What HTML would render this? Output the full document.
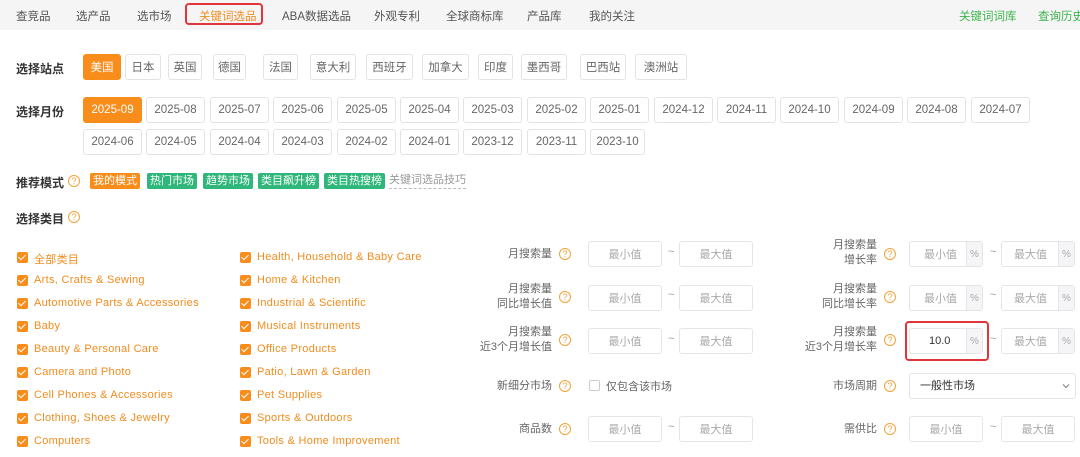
<!DOCTYPE html>
<html><head><meta charset="utf-8">
<style>
*{box-sizing:border-box;margin:0;padding:0}
body{width:1080px;height:457px;overflow:hidden;background:#fff;font-family:"Liberation Sans","Noto Sans CJK SC",sans-serif;font-size:12px;color:#333;position:relative}
.a{position:absolute;white-space:nowrap}
.nav{position:absolute;left:0;top:0;width:1080px;height:30px;background:#f5f5f6}
.nav span{position:absolute;top:8px;font-size:11.5px;color:#555;white-space:nowrap}
.lbl{font-size:12px;color:#333;font-weight:bold}
.btn{position:absolute;height:26px;border:1px solid #e3e3e3;border-radius:3px;font-size:11.5px;color:#666;display:flex;align-items:center;justify-content:center;background:#fff;white-space:nowrap}
.btn.on{background:#f98d1c;border-color:#f98d1c;color:#fff}
.q{position:absolute;width:12px;height:12px;border:1px solid #f2a33a;border-radius:50%;color:#f2a33a;font-size:9px;line-height:10px;text-align:center}
.tag{position:absolute;top:173px;height:16px;font-size:11px;color:#fff;line-height:16px;padding:0 3px;border-radius:2px;background:#2fb67a;white-space:nowrap}
.cb{position:absolute;width:11px;height:11px;background:#f98d1c;border-radius:2px}
.cb:after{content:"";position:absolute;left:3px;top:1px;width:3px;height:6px;border:solid #fff;border-width:0 1.5px 1.5px 0;transform:rotate(45deg)}
.ct{position:absolute;font-size:11px;color:#f08c1e;letter-spacing:.3px;white-space:nowrap}
.fl{position:absolute;text-align:right;font-size:11px;color:#666;line-height:15px;width:120px}
.in{position:absolute;height:26px;border:1px solid #e5e5e5;border-radius:3px;font-size:11px;color:#aaa;display:flex;align-items:center;justify-content:center;width:74px;white-space:nowrap}
.pc{position:absolute;right:0;top:0;bottom:0;width:16px;background:#f5f5f7;border-left:1px solid #e5e5e5;color:#aaa;font-size:10px;display:flex;align-items:center;justify-content:center}
.tl{position:absolute;color:#999;font-size:11px}
</style></head><body>
<div class="nav">
<span style="left:16px">查竞品</span><span style="left:76px">选产品</span><span style="left:137px">选市场</span>
<span style="left:199px;color:#f08c1e">关键词选品</span>
<span style="left:282px">ABA数据选品</span><span style="left:374px">外观专利</span><span style="left:446px">全球商标库</span><span style="left:527px">产品库</span><span style="left:589px">我的关注</span>
<span style="left:959px;color:#3bb34a">关键词词库</span><span style="left:1038px;color:#3bb34a">查询历史</span>
</div>
<div class="a" style="left:185px;top:3px;width:78px;height:22px;border:2px solid #e0353b;border-radius:4px"></div>

<div class="a lbl" style="left:16px;top:60px">选择站点</div>
<div class="btn on" style="left:83px;top:54px;width:38px">美国</div>
<div class="btn" style="left:125px;top:54px;width:36px">日本</div>
<div class="btn" style="left:168px;top:54px;width:34px">英国</div>
<div class="btn" style="left:213px;top:54px;width:33px">德国</div>
<div class="btn" style="left:263px;top:54px;width:35px">法国</div>
<div class="btn" style="left:310px;top:54px;width:46px">意大利</div>
<div class="btn" style="left:366px;top:54px;width:47px">西班牙</div>
<div class="btn" style="left:422px;top:54px;width:47px">加拿大</div>
<div class="btn" style="left:478px;top:54px;width:35px">印度</div>
<div class="btn" style="left:521px;top:54px;width:46px">墨西哥</div>
<div class="btn" style="left:580px;top:54px;width:46px">巴西站</div>
<div class="btn" style="left:635px;top:54px;width:52px">澳洲站</div>

<div class="a lbl" style="left:16px;top:103px">选择月份</div>
<div class="btn on" style="left:83px;top:97px;width:59px">2025-09</div>
<div class="btn" style="left:146px;top:97px;width:59px">2025-08</div>
<div class="btn" style="left:210px;top:97px;width:59px">2025-07</div>
<div class="btn" style="left:273px;top:97px;width:59px">2025-06</div>
<div class="btn" style="left:337px;top:97px;width:59px">2025-05</div>
<div class="btn" style="left:400px;top:97px;width:59px">2025-04</div>
<div class="btn" style="left:463px;top:97px;width:59px">2025-03</div>
<div class="btn" style="left:527px;top:97px;width:59px">2025-02</div>
<div class="btn" style="left:590px;top:97px;width:59px">2025-01</div>
<div class="btn" style="left:654px;top:97px;width:59px">2024-12</div>
<div class="btn" style="left:717px;top:97px;width:59px">2024-11</div>
<div class="btn" style="left:780px;top:97px;width:59px">2024-10</div>
<div class="btn" style="left:844px;top:97px;width:59px">2024-09</div>
<div class="btn" style="left:907px;top:97px;width:59px">2024-08</div>
<div class="btn" style="left:971px;top:97px;width:59px">2024-07</div>
<div class="btn" style="left:83px;top:129px;width:59px">2024-06</div>
<div class="btn" style="left:146px;top:129px;width:59px">2024-05</div>
<div class="btn" style="left:210px;top:129px;width:59px">2024-04</div>
<div class="btn" style="left:273px;top:129px;width:59px">2024-03</div>
<div class="btn" style="left:337px;top:129px;width:59px">2024-02</div>
<div class="btn" style="left:400px;top:129px;width:59px">2024-01</div>
<div class="btn" style="left:463px;top:129px;width:59px">2023-12</div>
<div class="btn" style="left:527px;top:129px;width:59px">2023-11</div>
<div class="btn" style="left:590px;top:129px;width:55px">2023-10</div>

<div class="a lbl" style="left:16px;top:174px">推荐模式</div><div class="q" style="left:68px;top:175px">?</div>
<div class="tag" style="left:90px;background:#f98d1c">我的模式</div>
<div class="tag" style="left:147px">热门市场</div>
<div class="tag" style="left:203px">趋势市场</div>
<div class="tag" style="left:258px">类目飙升榜</div>
<div class="tag" style="left:324px">类目热搜榜</div>
<div class="a" style="left:389px;top:173px;font-size:11px;color:#999;border-bottom:1px dashed #bbb;line-height:15px">关键词选品技巧</div>

<div class="a lbl" style="left:16px;top:210px">选择类目</div><div class="q" style="left:68px;top:211px">?</div>

<div class="cb" style="left:17px;top:252px"></div><div class="ct" style="left:34px;top:251px">全部类目</div>
<div class="cb" style="left:17px;top:275px"></div><div class="ct" style="left:34px;top:274px">Arts, Crafts &amp; Sewing</div>
<div class="cb" style="left:17px;top:298px"></div><div class="ct" style="left:34px;top:297px">Automotive Parts &amp; Accessories</div>
<div class="cb" style="left:17px;top:321px"></div><div class="ct" style="left:34px;top:320px">Baby</div>
<div class="cb" style="left:17px;top:344px"></div><div class="ct" style="left:34px;top:343px">Beauty &amp; Personal Care</div>
<div class="cb" style="left:17px;top:367px"></div><div class="ct" style="left:34px;top:366px">Camera and Photo</div>
<div class="cb" style="left:17px;top:390px"></div><div class="ct" style="left:34px;top:389px">Cell Phones &amp; Accessories</div>
<div class="cb" style="left:17px;top:413px"></div><div class="ct" style="left:34px;top:412px">Clothing, Shoes &amp; Jewelry</div>
<div class="cb" style="left:17px;top:436px"></div><div class="ct" style="left:34px;top:435px">Computers</div>
<div class="cb" style="left:240px;top:252px"></div><div class="ct" style="left:257px;top:251px">Health, Household &amp; Baby Care</div>
<div class="cb" style="left:240px;top:275px"></div><div class="ct" style="left:257px;top:274px">Home &amp; Kitchen</div>
<div class="cb" style="left:240px;top:298px"></div><div class="ct" style="left:257px;top:297px">Industrial &amp; Scientific</div>
<div class="cb" style="left:240px;top:321px"></div><div class="ct" style="left:257px;top:320px">Musical Instruments</div>
<div class="cb" style="left:240px;top:344px"></div><div class="ct" style="left:257px;top:343px">Office Products</div>
<div class="cb" style="left:240px;top:367px"></div><div class="ct" style="left:257px;top:366px">Patio, Lawn &amp; Garden</div>
<div class="cb" style="left:240px;top:390px"></div><div class="ct" style="left:257px;top:389px">Pet Supplies</div>
<div class="cb" style="left:240px;top:413px"></div><div class="ct" style="left:257px;top:412px">Sports &amp; Outdoors</div>
<div class="cb" style="left:240px;top:436px"></div><div class="ct" style="left:257px;top:435px">Tools &amp; Home Improvement</div>

<div class="fl" style="left:432px;top:247px">月搜索量</div><div class="q" style="left:559px;top:248px">?</div>
<div class="in" style="left:588px;top:241px">最小值</div><div class="tl" style="left:668px;top:246px">~</div><div class="in" style="left:679px;top:241px">最大值</div>
<div class="fl" style="left:432px;top:282px">月搜索量<br>同比增长值</div><div class="q" style="left:559px;top:291px">?</div>
<div class="in" style="left:588px;top:285px">最小值</div><div class="tl" style="left:668px;top:289px">~</div><div class="in" style="left:679px;top:285px">最大值</div>
<div class="fl" style="left:432px;top:325px">月搜索量<br>近3个月增长值</div><div class="q" style="left:559px;top:334px">?</div>
<div class="in" style="left:588px;top:328px">最小值</div><div class="tl" style="left:668px;top:333px">~</div><div class="in" style="left:679px;top:328px">最大值</div>
<div class="fl" style="left:432px;top:379px">新细分市场</div><div class="q" style="left:559px;top:380px">?</div>
<div class="a" style="left:589px;top:380px;width:11px;height:11px;border:1px solid #ccc;border-radius:2px"></div>
<div class="a" style="left:606px;top:378px;font-size:11px;color:#666">仅包含该市场</div>
<div class="fl" style="left:432px;top:422px">商品数</div><div class="q" style="left:559px;top:423px">?</div>
<div class="in" style="left:588px;top:416px">最小值</div><div class="tl" style="left:668px;top:421px">~</div><div class="in" style="left:679px;top:416px">最大值</div>

<div class="fl" style="left:757px;top:238px">月搜索量<br>增长率</div><div class="q" style="left:884px;top:248px">?</div>
<div class="in" style="left:909px;top:241px;justify-content:flex-start;padding-left:14px">最小值<div class="pc">%</div></div><div class="tl" style="left:990px;top:246px">~</div><div class="in" style="left:1001px;top:241px;justify-content:flex-start;padding-left:12px">最大值<div class="pc">%</div></div>
<div class="fl" style="left:757px;top:282px">月搜索量<br>同比增长率</div><div class="q" style="left:884px;top:291px">?</div>
<div class="in" style="left:909px;top:285px;justify-content:flex-start;padding-left:14px">最小值<div class="pc">%</div></div><div class="tl" style="left:990px;top:289px">~</div><div class="in" style="left:1001px;top:285px;justify-content:flex-start;padding-left:12px">最大值<div class="pc">%</div></div>
<div class="fl" style="left:757px;top:325px">月搜索量<br>近3个月增长率</div><div class="q" style="left:884px;top:334px">?</div>
<div class="in" style="left:909px;top:328px;justify-content:flex-start;padding-left:19px;color:#333">10.0<div class="pc">%</div></div><div class="tl" style="left:990px;top:333px">~</div><div class="in" style="left:1001px;top:328px;justify-content:flex-start;padding-left:12px">最大值<div class="pc">%</div></div>
<div class="a" style="left:905px;top:321px;width:84px;height:40px;border:2px solid #e0353b;border-radius:4px"></div>
<div class="fl" style="left:757px;top:379px">市场周期</div><div class="q" style="left:884px;top:380px">?</div>
<div class="a" style="left:909px;top:373px;width:167px;height:26px;border:1px solid #e5e5e5;border-radius:3px;font-size:11px;color:#333;padding:0 0 0 10px;line-height:24px">一般性市场<svg style="position:absolute;right:5px;top:9px" width="8" height="6" viewBox="0 0 8 6"><path d="M1 1.5L4 4.5L7 1.5" fill="none" stroke="#888" stroke-width="1.2"/></svg></div>
<div class="fl" style="left:757px;top:422px">需供比</div><div class="q" style="left:884px;top:423px">?</div>
<div class="in" style="left:909px;top:416px">最小值</div><div class="tl" style="left:990px;top:421px">~</div><div class="in" style="left:1001px;top:416px">最大值</div>
</body></html>
